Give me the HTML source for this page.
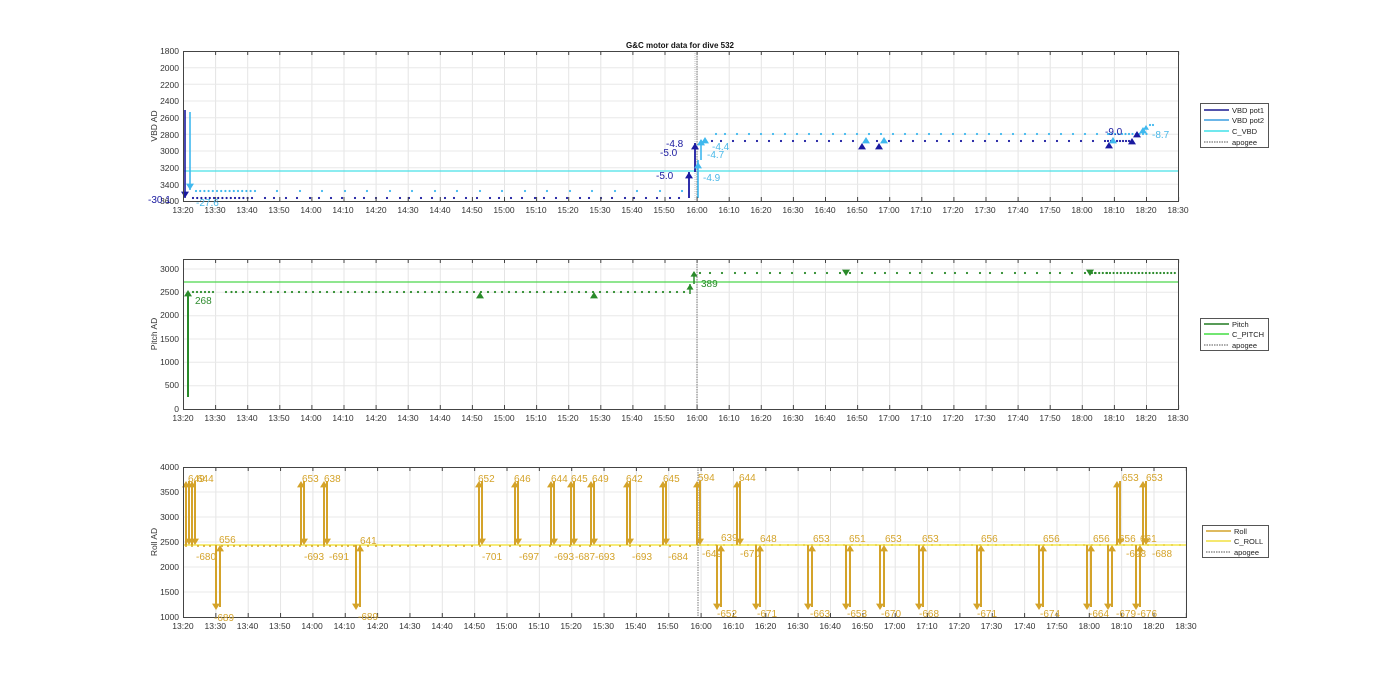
<!DOCTYPE html>
<html><head><meta charset="utf-8"><style>
html,body{margin:0;padding:0;background:#fff;}
svg{display:block;font-family:"Liberation Sans",sans-serif;}
.t{font-size:8.5px;fill:#333;}
.yl{font-size:8.5px;fill:#333;text-anchor:end;}
.xl{font-size:8.5px;fill:#333;text-anchor:middle;}
.lg{font-size:7.5px;fill:#222;}
.rl{font-size:10px;fill:#d4a32a;}
</style></head><body>
<svg id="s" width="1400" height="693" viewBox="0 0 1400 693" xmlns="http://www.w3.org/2000/svg">
<defs>
<pattern id="gx" x="183" y="0" width="32.1" height="693" patternUnits="userSpaceOnUse"><line x1="0.5" y1="0" x2="0.5" y2="693" stroke="#e4e4e4" stroke-width="1"/></pattern>
<pattern id="gx3" x="183" y="0" width="32.35" height="693" patternUnits="userSpaceOnUse"><line x1="0.5" y1="0" x2="0.5" y2="693" stroke="#e4e4e4" stroke-width="1"/></pattern>
</defs>
<text x="680" y="48" text-anchor="middle" style="font-size:8px;font-weight:bold;fill:#111">G&amp;C motor data for dive 532</text>
<!-- plot frames -->
<rect x="183" y="51" width="995" height="150" fill="url(#gx)"/>
<rect x="183" y="259" width="995" height="150" fill="url(#gx)"/>
<rect x="183" y="467" width="1003" height="150" fill="url(#gx3)"/>
<g id="hg" stroke="#e8e8e8" stroke-width="1"></g>
<g id="data"></g>
<rect x="183.5" y="51.5" width="995" height="150" fill="none" stroke="#444" stroke-width="1"/>
<rect x="183.5" y="259.5" width="995" height="150" fill="none" stroke="#444" stroke-width="1"/>
<rect x="183.5" y="467.5" width="1003" height="150" fill="none" stroke="#444" stroke-width="1"/>
<g id="ticks" stroke="#444" stroke-width="1"></g>

<!-- y labels top -->
<text class="yl" x="179" y="54">1800</text><text class="yl" x="179" y="71">2000</text><text class="yl" x="179" y="88">2200</text><text class="yl" x="179" y="104">2400</text><text class="yl" x="179" y="121">2600</text><text class="yl" x="179" y="138">2800</text><text class="yl" x="179" y="154">3000</text><text class="yl" x="179" y="171">3200</text><text class="yl" x="179" y="188">3400</text><text class="yl" x="179" y="204">3600</text>
<text class="t" transform="translate(157,126) rotate(-90)" text-anchor="middle">VBD AD</text>
<!-- y labels mid -->
<text class="yl" x="179" y="272">3000</text><text class="yl" x="179" y="295">2500</text><text class="yl" x="179" y="318">2000</text><text class="yl" x="179" y="342">1500</text><text class="yl" x="179" y="365">1000</text><text class="yl" x="179" y="388">500</text><text class="yl" x="179" y="412">0</text>
<text class="t" transform="translate(157,334) rotate(-90)" text-anchor="middle">Pitch AD</text>
<!-- y labels bottom -->
<text class="yl" x="179" y="470">4000</text><text class="yl" x="179" y="495">3500</text><text class="yl" x="179" y="520">3000</text><text class="yl" x="179" y="545">2500</text><text class="yl" x="179" y="570">2000</text><text class="yl" x="179" y="595">1500</text><text class="yl" x="179" y="620">1000</text>
<text class="t" transform="translate(157,542) rotate(-90)" text-anchor="middle">Roll AD</text>

<g id="xl1"><text class="xl" x="183" y="213">13:20</text><text class="xl" x="215" y="213">13:30</text><text class="xl" x="247" y="213">13:40</text><text class="xl" x="279" y="213">13:50</text><text class="xl" x="311" y="213">14:00</text><text class="xl" x="343" y="213">14:10</text><text class="xl" x="376" y="213">14:20</text><text class="xl" x="408" y="213">14:30</text><text class="xl" x="440" y="213">14:40</text><text class="xl" x="472" y="213">14:50</text><text class="xl" x="504" y="213">15:00</text><text class="xl" x="536" y="213">15:10</text><text class="xl" x="568" y="213">15:20</text><text class="xl" x="600" y="213">15:30</text><text class="xl" x="632" y="213">15:40</text><text class="xl" x="664" y="213">15:50</text><text class="xl" x="697" y="213">16:00</text><text class="xl" x="729" y="213">16:10</text><text class="xl" x="761" y="213">16:20</text><text class="xl" x="793" y="213">16:30</text><text class="xl" x="825" y="213">16:40</text><text class="xl" x="857" y="213">16:50</text><text class="xl" x="889" y="213">17:00</text><text class="xl" x="921" y="213">17:10</text><text class="xl" x="953" y="213">17:20</text><text class="xl" x="985" y="213">17:30</text><text class="xl" x="1018" y="213">17:40</text><text class="xl" x="1050" y="213">17:50</text><text class="xl" x="1082" y="213">18:00</text><text class="xl" x="1114" y="213">18:10</text><text class="xl" x="1146" y="213">18:20</text><text class="xl" x="1178" y="213">18:30</text></g>
<g transform="translate(0,208)"><text class="xl" x="183" y="213">13:20</text><text class="xl" x="215" y="213">13:30</text><text class="xl" x="247" y="213">13:40</text><text class="xl" x="279" y="213">13:50</text><text class="xl" x="311" y="213">14:00</text><text class="xl" x="343" y="213">14:10</text><text class="xl" x="376" y="213">14:20</text><text class="xl" x="408" y="213">14:30</text><text class="xl" x="440" y="213">14:40</text><text class="xl" x="472" y="213">14:50</text><text class="xl" x="504" y="213">15:00</text><text class="xl" x="536" y="213">15:10</text><text class="xl" x="568" y="213">15:20</text><text class="xl" x="600" y="213">15:30</text><text class="xl" x="632" y="213">15:40</text><text class="xl" x="664" y="213">15:50</text><text class="xl" x="697" y="213">16:00</text><text class="xl" x="729" y="213">16:10</text><text class="xl" x="761" y="213">16:20</text><text class="xl" x="793" y="213">16:30</text><text class="xl" x="825" y="213">16:40</text><text class="xl" x="857" y="213">16:50</text><text class="xl" x="889" y="213">17:00</text><text class="xl" x="921" y="213">17:10</text><text class="xl" x="953" y="213">17:20</text><text class="xl" x="985" y="213">17:30</text><text class="xl" x="1018" y="213">17:40</text><text class="xl" x="1050" y="213">17:50</text><text class="xl" x="1082" y="213">18:00</text><text class="xl" x="1114" y="213">18:10</text><text class="xl" x="1146" y="213">18:20</text><text class="xl" x="1178" y="213">18:30</text></g>
<g transform="translate(183,416) scale(1.008,1) translate(-183,0)"><text class="xl" x="183" y="213">13:20</text><text class="xl" x="215" y="213">13:30</text><text class="xl" x="247" y="213">13:40</text><text class="xl" x="279" y="213">13:50</text><text class="xl" x="311" y="213">14:00</text><text class="xl" x="343" y="213">14:10</text><text class="xl" x="376" y="213">14:20</text><text class="xl" x="408" y="213">14:30</text><text class="xl" x="440" y="213">14:40</text><text class="xl" x="472" y="213">14:50</text><text class="xl" x="504" y="213">15:00</text><text class="xl" x="536" y="213">15:10</text><text class="xl" x="568" y="213">15:20</text><text class="xl" x="600" y="213">15:30</text><text class="xl" x="632" y="213">15:40</text><text class="xl" x="664" y="213">15:50</text><text class="xl" x="697" y="213">16:00</text><text class="xl" x="729" y="213">16:10</text><text class="xl" x="761" y="213">16:20</text><text class="xl" x="793" y="213">16:30</text><text class="xl" x="825" y="213">16:40</text><text class="xl" x="857" y="213">16:50</text><text class="xl" x="889" y="213">17:00</text><text class="xl" x="921" y="213">17:10</text><text class="xl" x="953" y="213">17:20</text><text class="xl" x="985" y="213">17:30</text><text class="xl" x="1018" y="213">17:40</text><text class="xl" x="1050" y="213">17:50</text><text class="xl" x="1082" y="213">18:00</text><text class="xl" x="1114" y="213">18:10</text><text class="xl" x="1146" y="213">18:20</text><text class="xl" x="1178" y="213">18:30</text></g>

<!-- VBD labels -->
<g style="font-size:10px">
<text x="148" y="203" fill="#1a1aa0">-30.1</text>
<text x="196" y="206" fill="#4ab8e8">-27.6</text>
<text x="666" y="147" fill="#1a1aa0">-4.8</text>
<text x="660" y="156" fill="#1a1aa0">-5.0</text>
<text x="656" y="179" fill="#1a1aa0">-5.0</text>
<text x="703" y="181" fill="#4ab8e8">-4.9</text>
<text x="707" y="158" fill="#4ab8e8">-4.7</text>
<text x="712" y="150" fill="#4ab8e8">-4.4</text>
<text x="1105" y="135" fill="#1a1aa0">-9.0</text>
<text x="1152" y="138" fill="#4ab8e8">-8.7</text>
</g>
<g style="font-size:10px" fill="#2e8b2e">
<text x="195" y="304" fill="#2e8b2e">268</text>
<text x="701" y="287" fill="#2e8b2e">389</text>
</g>
<!-- roll labels -->
<g>
<text class="rl" x="188" y="482">649</text><text class="rl" x="197" y="482">644</text><text class="rl" x="196" y="560">-680</text>
<text class="rl" x="219" y="543">656</text><text class="rl" x="214" y="621">-689</text>
<text class="rl" x="302" y="482">653</text><text class="rl" x="324" y="482">638</text><text class="rl" x="304" y="560">-693</text><text class="rl" x="329" y="560">-691</text>
<text class="rl" x="360" y="544">641</text><text class="rl" x="358" y="620">-689</text>
<text class="rl" x="478" y="482">652</text><text class="rl" x="482" y="560">-701</text>
<text class="rl" x="514" y="482">646</text><text class="rl" x="519" y="560">-697</text>
<text class="rl" x="551" y="482">644</text><text class="rl" x="571" y="482">645</text><text class="rl" x="592" y="482">649</text><text class="rl" x="554" y="560">-693</text><text class="rl" x="575" y="560">-687</text><text class="rl" x="595" y="560">-693</text>
<text class="rl" x="626" y="482">642</text><text class="rl" x="632" y="560">-693</text>
<text class="rl" x="663" y="482">645</text><text class="rl" x="668" y="560">-684</text>
<text class="rl" x="698" y="481">594</text><text class="rl" x="702" y="557">-649</text>
<text class="rl" x="721" y="541">639</text><text class="rl" x="717" y="617">-652</text>
<text class="rl" x="739" y="481">644</text><text class="rl" x="740" y="557">-670</text>
<text class="rl" x="760" y="542">648</text><text class="rl" x="757" y="617">-671</text>
<text class="rl" x="813" y="542">653</text><text class="rl" x="810" y="617">-663</text>
<text class="rl" x="849" y="542">651</text><text class="rl" x="847" y="617">-653</text>
<text class="rl" x="885" y="542">653</text><text class="rl" x="881" y="617">-670</text>
<text class="rl" x="922" y="542">653</text><text class="rl" x="919" y="617">-668</text>
<text class="rl" x="981" y="542">656</text><text class="rl" x="977" y="617">-671</text>
<text class="rl" x="1043" y="542">656</text><text class="rl" x="1040" y="617">-674</text>
<text class="rl" x="1093" y="542">656</text><text class="rl" x="1089" y="617">-664</text>
<text class="rl" x="1119" y="542">656</text><text class="rl" x="1116" y="617">-679</text>
<text class="rl" x="1122" y="481">653</text><text class="rl" x="1126" y="557">-698</text>
<text class="rl" x="1140" y="542">661</text><text class="rl" x="1137" y="617">-676</text>
<text class="rl" x="1146" y="481">653</text><text class="rl" x="1152" y="557">-688</text>
</g>

<!-- legends -->
<g>
<rect x="1200.5" y="103.5" width="68" height="44" fill="#fff" stroke="#555"/>
<line x1="1204" y1="110" x2="1229" y2="110" stroke="#1a1a90" stroke-width="1.5"/><text class="lg" x="1232" y="113">VBD pot1</text>
<line x1="1204" y1="120" x2="1229" y2="120" stroke="#3a9ee0" stroke-width="1.5"/><text class="lg" x="1232" y="123">VBD pot2</text>
<line x1="1204" y1="131" x2="1229" y2="131" stroke="#40e0e8" stroke-width="1.5"/><text class="lg" x="1232" y="134">C_VBD</text>
<line x1="1204" y1="142" x2="1229" y2="142" stroke="#555" stroke-width="1" stroke-dasharray="1.5,1"/><text class="lg" x="1232" y="145">apogee</text>
<rect x="1200.5" y="318.5" width="68" height="32" fill="#fff" stroke="#555"/>
<line x1="1204" y1="324" x2="1229" y2="324" stroke="#207a20" stroke-width="1.5"/><text class="lg" x="1232" y="327">Pitch</text>
<line x1="1204" y1="334" x2="1229" y2="334" stroke="#44dd44" stroke-width="1.5"/><text class="lg" x="1232" y="337">C_PITCH</text>
<line x1="1204" y1="345" x2="1229" y2="345" stroke="#555" stroke-width="1" stroke-dasharray="1.5,1"/><text class="lg" x="1232" y="348">apogee</text>
<rect x="1202.5" y="525.5" width="66" height="32" fill="#fff" stroke="#555"/>
<line x1="1206" y1="531" x2="1231" y2="531" stroke="#d4a32a" stroke-width="1.5"/><text class="lg" x="1234" y="534">Roll</text>
<line x1="1206" y1="541" x2="1231" y2="541" stroke="#f2e040" stroke-width="1.5"/><text class="lg" x="1234" y="544">C_ROLL</text>
<line x1="1206" y1="552" x2="1231" y2="552" stroke="#555" stroke-width="1" stroke-dasharray="1.5,1"/><text class="lg" x="1234" y="555">apogee</text>
</g>
</svg>
<script>
(function(){
var NS="http://www.w3.org/2000/svg",D=document.getElementById("data"),T=document.getElementById("ticks"),H=document.getElementById("hg");
function el(n,a,p){var e=document.createElementNS(NS,n);for(var k in a)e.setAttribute(k,a[k]);(p||D).appendChild(e);return e;}
function ln(x1,y1,x2,y2,c,w,p,da){var a={x1:x1,y1:y1,x2:x2,y2:y2,stroke:c,"stroke-width":w||1};if(da)a["stroke-dasharray"]=da;return el("line",a,p);}
function dot(x,y,c,r){el("circle",{cx:x,cy:y,r:r||1.1,fill:c});}
function tri(x,y,c,s,down){s=s||4;var p=down?[x-s,y-s*1.6,x+s,y-s*1.6,x,y]:[x-s,y+s*1.6,x+s,y+s*1.6,x,y];el("polygon",{points:p.join(","),fill:c});}
// horizontal grids
[67.7,84.3,101,117.7,134.3,151,167.7,184.3].forEach(function(y){ln(183,y,1178,y,"#e8e8e8",1,H);});
[269,292.3,315.7,339,362.3,385.7].forEach(function(y){ln(183,y,1178,y,"#e8e8e8",1,H);});
[492,517,542,567,592].forEach(function(y){ln(183,y,1186,y,"#e8e8e8",1,H);});
// ticks
for(var i=0;i<=31;i++){var x=183.5+32.1*i;ln(x,51,x,55,"#444",1,T);ln(x,201,x,197,"#444",1,T);ln(x,259,x,263,"#444",1,T);ln(x,409,x,405,"#444",1,T);
var x3=183.5+32.35*i;ln(x3,467,x3,471,"#444",1,T);ln(x3,617,x3,613,"#444",1,T);}
var DB="#1a1aa0",CY="#3fb8ee",CV="#48e0e6",GR="#2a8a2a",GL="#4cd64c",RO="#d4a32a",RL="#f3e64a";
// VBD plot
ln(183,171,1178,171,CV,1.2);
ln(697,51,697,201,"#777",1,null,"1.5,1");ln(695,51,695,201,"#999",0.6,null,"1,1");
ln(185,110,185,198,DB,1.6);tri(185,198,DB,4,true);
ln(190,112,190,190,CY,1.6);tri(190,190,CY,4,true);
var t=[];for(var k=0;k<14;k++)t.push(193+k*4.2);
for(var x=252;x<690;x+=9+((x*7)%5)){t.push(x);}
t.forEach(function(x,i){dot(x,198,DB);if(i%2==0||x<260)dot(x+3,191,CY);});
ln(689,198,689,172,DB,1.8);tri(689,172,DB,4);ln(695,172,695,143,DB,1.8);tri(695,143,DB,4);
ln(698,198,698,160,CY,1.6);tri(698,162,CY,4);ln(701,160,701,140,CY,1.6);tri(701,139,CY,4);tri(705,137,CY,4);
for(var x=712;x<1108;x+=9+((x*3)%6)){dot(x,141,DB);dot(x+4,134,CY);}
for(var x=1108;x<1132;x+=3)dot(x,141,DB);
for(var x=1108;x<1150;x+=3.5)dot(x,134,CY);
tri(862,143,DB,4);tri(866,137,CY,4);tri(879,143,DB,4);tri(884,137,CY,4);tri(1109,142,DB,4);tri(1113,137,CY,4);
tri(1132,138,DB,4);tri(1137,131,DB,4);tri(1143,127,CY,4);tri(1146,125,CY,3);dot(1150,125,CY);dot(1153,125,CY);
// Pitch
ln(183,282,1178,282,GL,1.2);
ln(697,259,697,409,"#777",1,null,"1.5,1");
ln(188,397,188,292,GR,2);tri(188,290,GR,4);
for(var k=0;k<30;k++){var x=193+k*4+ (k>5?k*1.5:0);if(x<235)dot(x,292,GR);}
for(var x=236;x<690;x+=7+((x*5)%5)){dot(x,292,GR);}
tri(480,292,GR,4);tri(594,292,GR,4);ln(690,294,690,284,GR,1.5);tri(690,284,GR,3.5);ln(694,284,694,272,GR,1.5);tri(694,271,GR,3.5);
for(var x=700;x<1110;x+=10+((x*3)%7)){dot(x,273,GR);}
for(var x=1092;x<1176;x+=3.6)dot(x,273,GR);
tri(846,276,GR,4,true);tri(1090,276,GR,4,true);
// Roll
ln(183,545,1186,545,RL,1.5);
ln(698,467,698,617,"#777",1,null,"1.5,1");
for(var x=186;x<700;x+=(x<360?6:x<480?8:10)){dot(x,546,RO,1);}
for(var x=700;x<1186;x+=8){dot(x,545,"#e8d040",1);}
function ud(x){ln(x,545,x,484,RO,2);tri(x,481,RO,4);ln(x+3,481,x+3,542,RO,2);tri(x+3,545,RO,4,true);}
function du(x){ln(x,545,x,607,RO,2);tri(x,610,RO,4,true);ln(x+4,607,x+4,548,RO,2);tri(x+4,545,RO,4);}
[186,192,301,324,479,515,551,571,591,627,663,697,737,1117,1143].forEach(ud);
[216,356,717,756,808,846,880,919,977,1039,1087,1108,1136].forEach(du);
})();
</script>
</body></html>
